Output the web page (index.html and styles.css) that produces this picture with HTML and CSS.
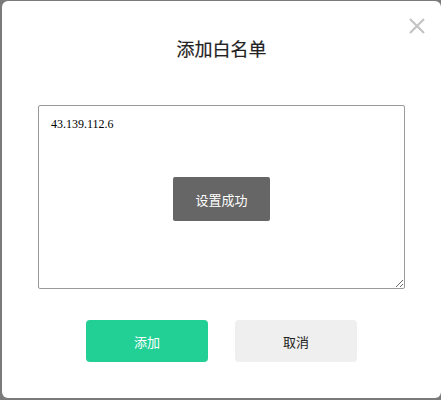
FILE: index.html
```html
<!DOCTYPE html>
<html lang="zh-CN">
<head>
<meta charset="utf-8">
<title>添加白名单</title>
<link rel="stylesheet" href="styles.css">
</head>
<body>
<div class="dialog">
  <button class="close" aria-label="关闭">
    <svg width="16" height="16" viewBox="0 0 16 16"><path d="M1 1 L15 15 M15 1 L1 15" stroke="#c4c4c4" stroke-width="2.2" fill="none"/></svg>
  </button>
  <h1 class="title">添加白名单</h1>
  <textarea class="ips">43.139.112.6</textarea>
  <div class="actions">
    <button class="btn btn-primary">添加</button>
    <button class="btn btn-cancel">取消</button>
  </div>
  <div class="toast">设置成功</div>
</div>
</body>
</html>
```
FILE: styles.css
```css
html, body {
  margin: 0;
  padding: 0;
  background: #7b7b7b;
  width: 441px;
  height: 400px;
  overflow: hidden;
}
.dialog {
  position: relative;
  box-sizing: border-box;
  margin: 1px 0 0 2px;
  width: 439px;
  height: 397px;
  background: #fff;
  border-radius: 6px;
  display: flex;
  flex-direction: column;
  align-items: center;
  font-family: "Liberation Serif", "Noto Sans CJK SC", serif;
}
.close {
  position: absolute;
  top: 17px;
  right: 16px;
  padding: 0;
  border: 0;
  background: none;
  width: 16px;
  height: 16px;
  display: block;
}
.close svg { display: block; }
.title {
  margin: 37px 0 0;
  font-size: 18px;
  line-height: 24px;
  font-weight: normal;
  color: #222;
  -webkit-text-stroke: 0.2px #222;
}
.ips {
  box-sizing: border-box;
  margin-top: 43px;
  width: 367px;
  height: 184px;
  border: 1px solid #9a9a9a;
  border-radius: 2px;
  padding: 11px 12px;
  font-family: "Liberation Serif", serif;
  font-size: 12px;
  line-height: 14px;
  color: #000;
  outline: none;
}
.actions {
  margin-top: 31px;
  display: flex;
  gap: 27px;
}
.btn {
  width: 122px;
  height: 42px;
  border: 0;
  border-radius: 4px;
  font-family: "Liberation Serif", "Noto Sans CJK SC", serif;
  font-size: 13px;
}
.btn-primary {
  background: #22d096;
  color: #fff;
}
.btn-cancel {
  background: #efefef;
  color: #222;
}
.toast {
  position: absolute;
  left: 171px;
  top: 176px;
  width: 97px;
  height: 44px;
  background: #666;
  color: #fff;
  border-radius: 2px;
  font-size: 13px;
  display: flex;
  align-items: center;
  justify-content: center;
}
```
